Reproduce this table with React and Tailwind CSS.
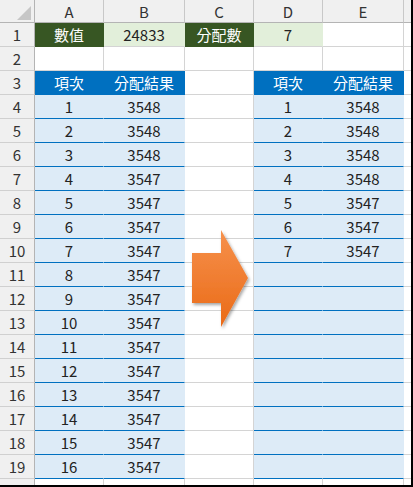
import React from "react";

const font = { fontFamily: '"Noto Sans CJK TC", "Noto Sans", sans-serif' };

const leftData = Array.from({ length: 16 }, (_, i) => [String(i + 1), i < 3 ? "3548" : "3547"]);
const rightData = [
  ["1", "3548"], ["2", "3548"], ["3", "3548"], ["4", "3548"],
  ["5", "3547"], ["6", "3547"], ["7", "3547"],
];

function Cell({ cls = "", children }) {
  return (
    <div className={"flex items-center justify-center border-r border-b text-[15px] leading-none " + cls}>
      {children}
    </div>
  );
}

const W = "bg-white border-[#d4d4d4] text-[#222]";
const DG = "bg-[#375623] border-[#375623] text-white";
const LG = "bg-[#e2efda] border-r-[#e2efda] border-b-[#d4d4d4] text-[#222]";
const BH = "bg-[#0070c0] border-[#0070c0] text-white";
const LB = "bg-[#ddebf7] border-r-[#ddebf7] border-b-[#0070c0] text-[#222]";
const HD = "bg-[#f0f0f0] border-[#c8c8c8] text-[#333] text-[14px]";
const RH = "bg-[#f0f0f0] border-r-[#b4b4b4] border-b-[#d0d0d0] text-[#333] text-[14px]";

function rowCells(r) {
  if (r === 1)
    return [
      <Cell key="a" cls={DG}>數值</Cell>,
      <Cell key="b" cls={LG}>24833</Cell>,
      <Cell key="c" cls={DG}>分配數</Cell>,
      <Cell key="d" cls={LG}>7</Cell>,
      <Cell key="e" cls={W}></Cell>,
      <Cell key="f" cls={W}></Cell>,
    ];
  if (r === 2)
    return ["a", "b", "c", "d", "e", "f"].map((k) => <Cell key={k} cls={W}></Cell>);
  if (r === 3)
    return [
      <Cell key="a" cls={BH}>項次</Cell>,
      <Cell key="b" cls={BH}>分配結果</Cell>,
      <Cell key="c" cls={W}></Cell>,
      <Cell key="d" cls={BH}>項次</Cell>,
      <Cell key="e" cls={BH}>分配結果</Cell>,
      <Cell key="f" cls={W}></Cell>,
    ];
  const l = leftData[r - 4];
  const rd = rightData[r - 4];
  return [
    <Cell key="a" cls={LB}>{l[0]}</Cell>,
    <Cell key="b" cls={LB}>{l[1]}</Cell>,
    <Cell key="c" cls={W}></Cell>,
    <Cell key="d" cls={LB}>{rd ? rd[0] : ""}</Cell>,
    <Cell key="e" cls={LB}>{rd ? rd[1] : ""}</Cell>,
    <Cell key="f" cls={W}></Cell>,
  ];
}

export default function App() {
  const rows = Array.from({ length: 19 }, (_, i) => i + 1);
  return (
    <div className="relative w-[413px] h-[487px] overflow-hidden bg-white" style={font}>
      <div className="w-[413px] h-[487px] border-r-2 border-b-2 border-black overflow-hidden">
        <div className="grid grid-cols-[35px_69px_81px_69px_69px_81px_20px] grid-rows-[23px_repeat(19,24px)_24px]">
          <div className="relative bg-[#f0f0f0] border-r border-b border-[#b4b4b4]">
            <svg className="absolute left-[17px] top-[6px]" width="14" height="14" viewBox="0 0 14 14">
              <polygon points="14,0 14,14 0,14" fill="#c6c6c6" />
            </svg>
          </div>
          {["A", "B", "C", "D", "E", ""].map((h, i) => (
            <Cell key={"h" + i} cls={HD + " border-b-[#b4b4b4]"}>{h}</Cell>
          ))}
          {rows.map((r) => (
            <React.Fragment key={r}>
              <Cell cls={RH}>{r}</Cell>
              {rowCells(r)}
            </React.Fragment>
          ))}
          <Cell cls={RH}></Cell>
          {["a", "b", "c", "d", "e", "f"].map((k) => (
            <Cell key={"z" + k} cls={W}></Cell>
          ))}
        </div>
      </div>
      <svg className="absolute left-[190px] top-[227px]" width="66" height="108" viewBox="0 0 66 108">
        <defs>
          <linearGradient id="og" x1="0" y1="0" x2="0" y2="1">
            <stop offset="0" stopColor="#f6914c" />
            <stop offset="1" stopColor="#ea6a17" />
          </linearGradient>
          <filter id="sh" x="-20%" y="-20%" width="150%" height="150%">
            <feDropShadow dx="1.5" dy="2" stdDeviation="1.5" floodColor="#000" floodOpacity="0.35" />
          </filter>
        </defs>
        <polygon
          points="2,26 31,26 31,3 58,51 31,100 31,76 2,76"
          fill="url(#og)"
          filter="url(#sh)"
        />
      </svg>
    </div>
  );
}
